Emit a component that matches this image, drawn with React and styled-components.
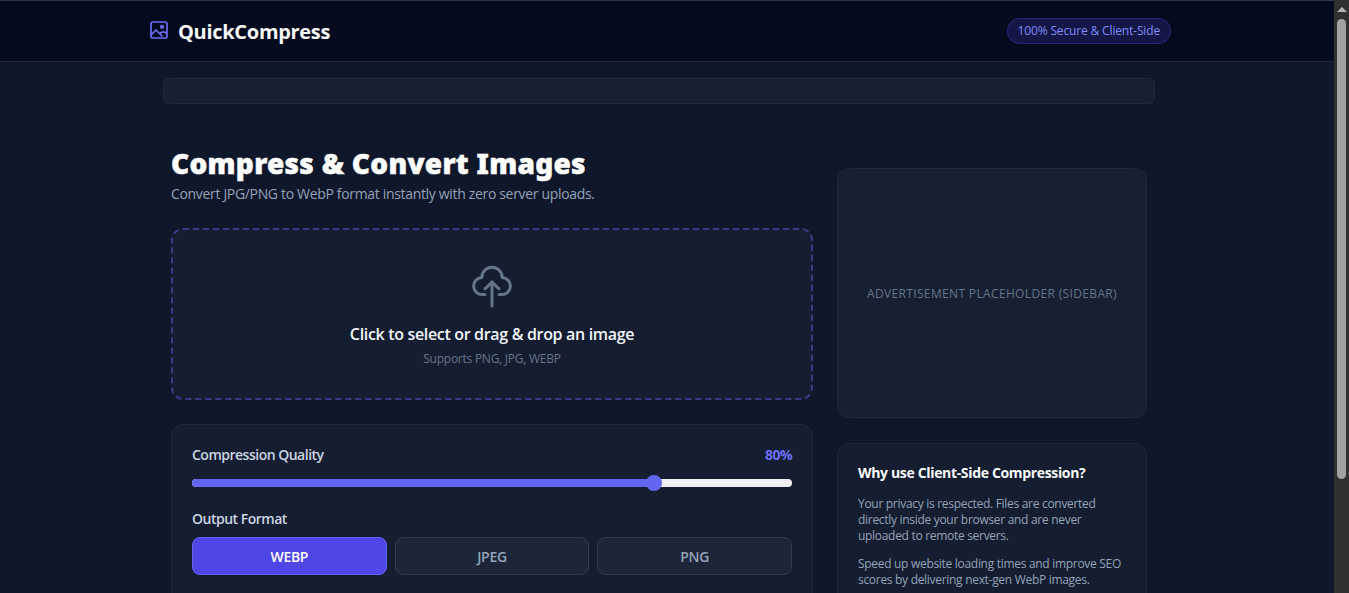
import React from "react";
import styled, { createGlobalStyle } from "styled-components";

const GlobalStyle = createGlobalStyle`
  html {
    background: #0f172a;
  }
  body {
    margin: 0;
    padding-right: 15px;
    background: #0f172a;
    color: #f8fafc;
    font-family: "Open Sans", "Liberation Sans", sans-serif;
  }
  * {
    box-sizing: border-box;
  }
`;

const ScrollBar = styled.div`
  position: fixed;
  top: 0;
  right: 0;
  bottom: 0;
  width: 15px;
  display: flex;
  flex-direction: column;
  align-items: center;
  background: #30302e;
`;

const ScrollArrow = styled.div`
  width: 0;
  height: 0;
  margin: 7px 0 7px;
  border-left: 5px solid transparent;
  border-right: 5px solid transparent;
  border-bottom: 5px solid #b4b4b4;
`;

const ScrollThumb = styled.div`
  width: 9px;
  height: 460px;
  background: #a2a2a2;
  border-radius: 5px;
`;

const Header = styled.header`
  height: 62px;
  padding-right: 13px;
  background: #050b1f;
  border-top: 1px solid #33363f;
  border-bottom: 1px solid #1e293b;
`;

const HeaderInner = styled.div`
  width: 1021px;
  height: 100%;
  margin: 0 auto;
  display: flex;
  align-items: center;
  justify-content: space-between;
`;

const Brand = styled.div`
  display: flex;
  align-items: center;
  gap: 10px;
  color: #6c6ff5;
  font-size: 20px;
  font-weight: 700;
  letter-spacing: -0.3px;
`;

const LogoIcon = styled.svg`
  width: 18px;
  height: 18px;
  margin-top: -2px;
  fill: none;
  stroke: currentColor;
  stroke-width: 1.7;
  stroke-linecap: round;
  stroke-linejoin: round;
`;

const BrandName = styled.span`
  color: #f8fafc;
`;

const Badge = styled.span`
  padding: 4px 10px;
  font-size: 12px;
  font-weight: 500;
  line-height: 16px;
  letter-spacing: -0.15px;
  color: #818cf8;
  background: rgba(79, 70, 229, 0.2);
  border: 1px solid rgba(79, 70, 229, 0.3);
  border-radius: 999px;
`;

const Main = styled.main`
  padding-right: 16px;
`;

const Inner = styled.div`
  width: 992px;
  margin: 0 auto;
  padding-top: 16px;
`;

const AdBar = styled.div`
  height: 26px;
  background: #162032;
  border: 1px solid #1e293b;
  border-radius: 6px;
`;

const Columns = styled.div`
  display: grid;
  grid-template-columns: 642px 310px;
  gap: 24px;
  padding: 41px 8px 0;
`;

const Title = styled.h1`
  margin: 0 0 2px;
  font-family: "Noto Sans", "Open Sans", sans-serif;
  font-size: 28px;
  font-weight: 900;
  line-height: 36px;
  letter-spacing: 0.28px;
  -webkit-text-stroke: 0.5px #fff;
  color: #fff;
`;

const Subtitle = styled.p`
  margin: 0 0 23px;
  font-size: 14px;
  line-height: 22px;
  letter-spacing: -0.33px;
  color: #94a3b8;
`;

const DropZone = styled.div`
  height: 172px;
  display: flex;
  flex-direction: column;
  align-items: center;
  padding-top: 32px;
  background: #151d30;
  border: 2px dashed #3b3a8a;
  border-radius: 12px;
`;

const CloudIcon = styled.svg`
  width: 48px;
  height: 48px;
  margin-bottom: 12px;
  fill: none;
  stroke: #64748b;
  stroke-width: 1.5;
  stroke-linecap: round;
  stroke-linejoin: round;
`;

const DropTitle = styled.div`
  font-size: 16px;
  font-weight: 600;
  line-height: 24px;
  letter-spacing: -0.33px;
  color: #f1f5f9;
`;

const DropHint = styled.div`
  margin-top: 3px;
  font-size: 12px;
  line-height: 20px;
  letter-spacing: -0.25px;
  color: #64748b;
`;

const Panel = styled.section`
  margin-top: 24px;
  padding: 20px;
  height: 190px;
  background: #151d30;
  border: 1px solid #1e293b;
  border-radius: 12px;
`;

const LabelRow = styled.div`
  display: flex;
  justify-content: space-between;
  font-size: 14px;
  font-weight: 600;
  line-height: 20px;
  letter-spacing: -0.5px;
  color: #cbd5e1;
`;

const Percent = styled.span`
  color: #6c6ff5;
  font-weight: 700;
`;

const Track = styled.div`
  position: relative;
  height: 8px;
  margin: 14px 0 22px;
  background: #efefef;
  border-radius: 4px;
`;

const Fill = styled.div`
  height: 100%;
  background: #6366f1;
  border-radius: 4px 0 0 4px;
`;

const Thumb = styled.div`
  position: absolute;
  top: -4px;
  width: 16px;
  height: 16px;
  margin-left: -8px;
  background: #6366f1;
  border-radius: 50%;
`;

const FormatLabel = styled.div`
  margin-bottom: 8px;
  font-size: 14px;
  font-weight: 600;
  line-height: 20px;
  letter-spacing: -0.5px;
  color: #cbd5e1;
`;

const FormatRow = styled.div`
  display: grid;
  grid-template-columns: repeat(3, 1fr);
  gap: 8px;
`;

const FormatButton = styled.button`
  height: 38px;
  padding: 0;
  font-family: inherit;
  font-size: 14px;
  font-weight: 600;
  letter-spacing: -0.3px;
  color: ${(p) => (p.$active ? "#fff" : "#94a3b8")};
  background: ${(p) => (p.$active ? "#4f46e5" : "#1c2638")};
  border: 1px solid ${(p) => (p.$active ? "#6366f1" : "#2f3b4e")};
  border-radius: 8px;
`;

const Sidebar = styled.aside`
  display: flex;
  flex-direction: column;
  gap: 25px;
  padding-top: 23px;
`;

const AdBox = styled.div`
  height: 250px;
  display: flex;
  align-items: center;
  justify-content: center;
  font-size: 12px;
  letter-spacing: 0.35px;
  color: #64748b;
  background: #162032;
  border: 1px solid #1e293b;
  border-radius: 12px;
`;

const InfoCard = styled.div`
  padding: 20px;
  background: #151d30;
  border: 1px solid #1e293b;
  border-radius: 12px;
`;

const InfoTitle = styled.h3`
  margin: 0 0 14px;
  font-size: 14px;
  font-weight: 700;
  line-height: 18px;
  letter-spacing: -0.34px;
  color: #f8fafc;
`;

const InfoText = styled.p`
  margin: 0 0 12px;
  font-size: 12px;
  line-height: 16px;
  letter-spacing: -0.3px;
  color: #94a3b8;
`;

const FORMATS = ["WEBP", "JPEG", "PNG"];

export default function App() {
  const quality = 77;

  return (
    <>
      <GlobalStyle />
      <ScrollBar>
        <ScrollArrow />
        <ScrollThumb />
      </ScrollBar>
      <Header>
        <HeaderInner>
          <Brand>
            <LogoIcon viewBox="0 0 18 18">
              <rect x="1" y="1" width="16" height="16" rx="2" />
              <circle cx="12" cy="5.8" r="1.3" />
              <path d="M1.5 13.5 6 9l6 6" />
              <path d="M10.5 12c2-1.5 4-1.5 6 .3" />
            </LogoIcon>
            <BrandName>QuickCompress</BrandName>
          </Brand>
          <Badge>100% Secure &amp; Client-Side</Badge>
        </HeaderInner>
      </Header>
      <Main>
        <Inner>
          <AdBar />
          <Columns>
            <div>
              <Title>Compress &amp; Convert Images</Title>
              <Subtitle>Convert JPG/PNG to WebP format instantly with zero server uploads.</Subtitle>
              <DropZone>
                <CloudIcon viewBox="0 0 24 24">
                  <path d="M8.5 16.3H7.3A4.3 4.3 0 0 1 6.9 7.7a5.1 5.1 0 0 1 10.2 0A4.3 4.3 0 0 1 16.7 16.3H15.5" />
                  <path d="M12 10v12" />
                  <path d="M8.5 13.4 12 10l3.5 3.4" />
                </CloudIcon>
                <DropTitle>Click to select or drag &amp; drop an image</DropTitle>
                <DropHint>Supports PNG, JPG, WEBP</DropHint>
              </DropZone>
              <Panel>
                <LabelRow>
                  <span>Compression Quality</span>
                  <Percent>80%</Percent>
                </LabelRow>
                <Track>
                  <Fill style={{ width: `${quality}%` }} />
                  <Thumb style={{ left: `${quality}%` }} />
                </Track>
                <FormatLabel>Output Format</FormatLabel>
                <FormatRow>
                  {FORMATS.map((f, i) => (
                    <FormatButton key={f} $active={i === 0}>{f}</FormatButton>
                  ))}
                </FormatRow>
              </Panel>
            </div>
            <Sidebar>
              <AdBox>ADVERTISEMENT PLACEHOLDER (SIDEBAR)</AdBox>
              <InfoCard>
                <InfoTitle>Why use Client-Side Compression?</InfoTitle>
                <InfoText>Your privacy is respected. Files are converted directly inside your browser and are never uploaded to remote servers.</InfoText>
                <InfoText>Speed up website loading times and improve SEO scores by delivering next-gen WebP images.</InfoText>
              </InfoCard>
            </Sidebar>
          </Columns>
        </Inner>
      </Main>
    </>
  );
}
